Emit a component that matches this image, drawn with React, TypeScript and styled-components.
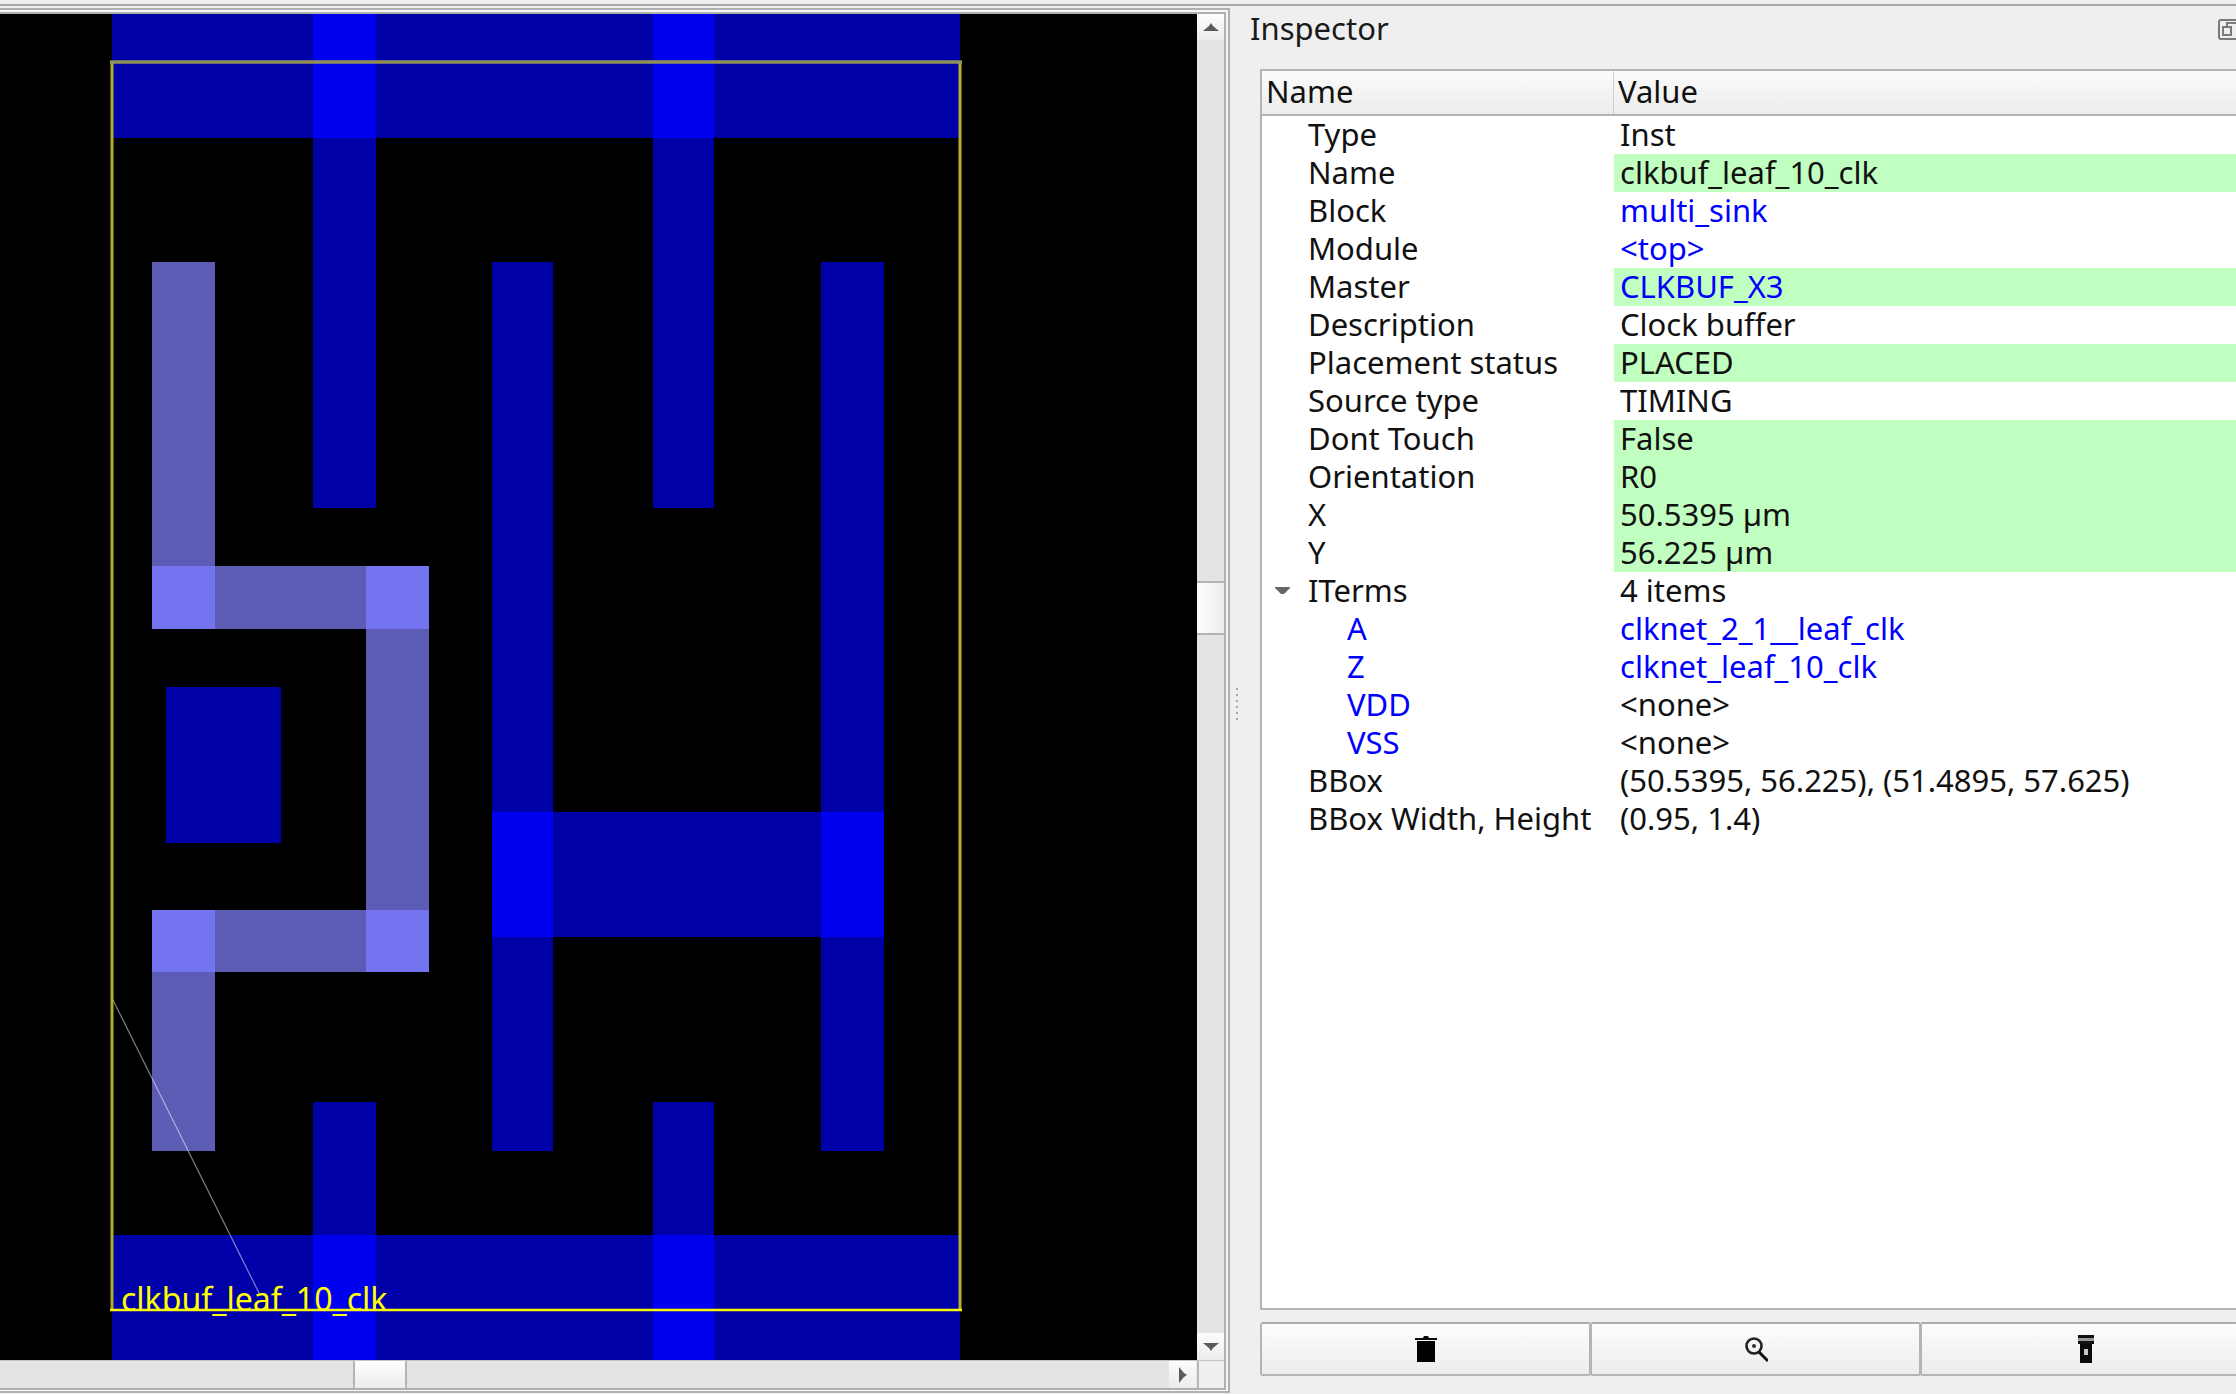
import React from 'react';
import styled, { createGlobalStyle } from 'styled-components';

const GlobalStyle = createGlobalStyle`
  html, body {
    margin: 0;
    padding: 0;
    width: 2236px;
    height: 1394px;
    overflow: hidden;
    background: #efefef;
    font-family: "Noto Sans", "Open Sans", sans-serif;
  }
`;

const Root = styled.div`
  width: 2236px;
  height: 1394px;
  padding-top: 4px;
  box-sizing: border-box;
  overflow: hidden;
  background: #efefef;
`;

const Columns = styled.div`
  display: flex;
  border-top: 2px solid #aaaaaa;
  width: 2250px;
`;

const CanvasDock = styled.div`
  flex: 0 0 1230px;
  box-sizing: border-box;
  padding-top: 2px;
`;

const OuterFrame = styled.div`
  border-top: 2px solid #b0b0b0;
  border-right: 2px solid #b0b0b0;
  border-bottom: 2px solid #b0b0b0;
  padding: 2px 2px 1px 0;
  background: #f6f6f6;
`;

const InnerFrame = styled.div`
  display: grid;
  grid-template-columns: 1197px 27px;
  grid-template-rows: 1346px 28px;
  border-top: 2px solid #b0b0b0;
  border-right: 2px solid #b0b0b0;
  border-bottom: 2px solid #b0b0b0;
`;

const Layout = styled.svg`
  display: block;
  width: 1197px;
  height: 1346px;
  background: #000;
`;

const LayoutLabel = styled.text`
  font-family: "Noto Sans", sans-serif;
  font-size: 32px;
  fill: #ffff00;
`;

const VScroll = styled.div`
  display: flex;
  flex-direction: column;
  background: #e4e4e4;
`;

const HScroll = styled.div`
  display: flex;
  background: #e4e4e4;
  border-top: 1px solid #c4c4c4;
  box-sizing: border-box;
`;

const Track = styled.div<{ $size: number }>`
  flex: 0 0 ${(p) => p.$size}px;
  background: #e4e4e4;
`;

const Handle = styled.div<{ $size: number; $horizontal?: boolean }>`
  flex: 0 0 ${(p) => p.$size}px;
  box-sizing: border-box;
  background: linear-gradient(to ${(p) => (p.$horizontal ? 'bottom' : 'right')}, #ffffff, #ececec);
  ${(p) =>
    p.$horizontal
      ? 'border-left: 2px solid #b4b4b4; border-right: 2px solid #b4b4b4;'
      : 'border-top: 2px solid #b4b4b4; border-bottom: 2px solid #b4b4b4;'}
`;

const ArrowButton = styled.div<{ $size: number }>`
  flex: 0 0 ${(p) => p.$size}px;
  display: flex;
  align-items: center;
  justify-content: center;
  box-sizing: border-box;
  background: linear-gradient(to bottom, #fcfcfc, #ececec);
`;

const Corner = styled.div`
  background: #efefef;
  border-top: 1px solid #c4c4c4;
  border-left: 2px solid #b8b8b8;
  box-sizing: border-box;
`;

const Panel = styled.div`
  flex: 0 0 1020px;
  position: relative;
  box-sizing: border-box;
  padding-left: 30px;
`;

const GripDots = styled.svg`
  position: absolute;
  left: 6px;
  top: 682px;
  width: 2px;
  height: 34px;
`;

const TitleBar = styled.div`
  height: 63px;
  display: flex;
  align-items: flex-start;
  justify-content: space-between;
  padding-right: 10px;
  margin-left: -10px;
`;

const Title = styled.div`
  font-size: 31px;
  line-height: 44px;
  color: #1a1a1a;
`;

const FloatIcon = styled.svg`
  width: 22px;
  height: 22px;
  margin-top: 13px;
`;

const Tree = styled.div`
  height: 1241px;
  box-sizing: border-box;
  border: 2px solid #b4b4b4;
  background: #fff;
  font-size: 31px;
  color: #111;
`;

const HeaderRow = styled.div`
  display: flex;
  height: 45px;
  box-sizing: border-box;
  border-bottom: 2px solid #b4b4b4;
  background: linear-gradient(to bottom, #fbfbfb, #ececec);
`;

const HeaderCell = styled.div<{ $width?: number }>`
  ${(p) => (p.$width ? `flex: 0 0 ${p.$width}px; border-right: 1px solid #cfcfcf;` : 'flex: 1;')}
  box-sizing: border-box;
  padding-left: 4px;
  line-height: 41px;
`;

const Row = styled.div`
  display: flex;
  height: 38px;
  line-height: 36px;
`;

const NameCell = styled.div<{ $depth?: number }>`
  flex: 0 0 352px;
  box-sizing: border-box;
  padding-left: ${(p) => (p.$depth ? 85 : 46)}px;
  position: relative;
  white-space: nowrap;
  color: ${(p) => (p.$depth ? '#0000ff' : 'inherit')};
`;

const ValueCell = styled.div<{ $edited?: boolean; $link?: boolean }>`
  flex: 1;
  padding-left: 6px;
  white-space: nowrap;
  background: ${(p) => (p.$edited ? '#c0ffc0' : 'transparent')};
  color: ${(p) => (p.$link ? '#0000ff' : 'inherit')};
`;

const Caret = styled.svg`
  position: absolute;
  left: 13px;
  top: 15px;
  width: 15px;
  height: 8px;
`;

const Buttons = styled.div`
  display: grid;
  grid-template-columns: repeat(3, 1fr);
  height: 54px;
  margin-top: 12px;
`;

const ToolButton = styled.div`
  display: flex;
  align-items: center;
  justify-content: center;
  border: 2px solid #b4b4b4;
  border-top-color: #acacac;
  border-radius: 3px;
  margin-right: -1px;
  box-sizing: border-box;
  background: linear-gradient(to bottom, #fdfdfd, #ececec);
`;

const ToolIcon = styled.svg`
  width: 24px;
  height: 30px;
`;

type Rect = [number, number, number, number];

// shapes in view coordinates: y is screen y minus 14
const metal: Rect[] = [
  [112, 0, 848, 124],
  [112, 1221, 848, 125],
  [313, 0, 63, 494],
  [653, 0, 61, 494],
  [313, 1088, 63, 258],
  [653, 1088, 61, 258],
  [492, 248, 61, 889],
  [821, 248, 63, 889],
  [492, 798, 392, 125],
  [166, 673, 115, 156],
];

const metalBright: Rect[] = [
  [313, 0, 63, 124],
  [653, 0, 61, 124],
  [313, 1221, 63, 125],
  [653, 1221, 61, 125],
  [492, 798, 61, 125],
  [821, 798, 63, 125],
];

const pin: Rect[] = [
  [152, 248, 63, 304],
  [152, 552, 277, 63],
  [366, 552, 63, 344],
  [152, 896, 277, 62],
  [152, 896, 63, 241],
];

const pinBright: Rect[] = [
  [152, 552, 63, 63],
  [366, 552, 63, 63],
  [152, 896, 63, 62],
  [366, 896, 63, 62],
];

const Rects = ({ items, fill }: { items: Rect[]; fill: string }) => (
  <>
    {items.map(([x, y, width, height]) => (
      <rect key={`${x}-${y}-${width}`} x={x} y={y} width={width} height={height} fill={fill} />
    ))}
  </>
);

const LayoutView = () => (
  <Layout viewBox="0 0 1197 1346">
    <Rects items={metal} fill="#0000a8" />
    <Rects items={metalBright} fill="#0000f0" />
    <Rects items={pin} fill="#5c5cb4" />
    <Rects items={pinBright} fill="#7474f0" />
    <line x1="112" y1="984" x2="260" y2="1281" stroke="#ffffff" strokeOpacity="0.5" strokeWidth="1.2" />
    <path d="M112 48V1296" stroke="#b0b028" strokeWidth="3" fill="none" />
    <path d="M960 48V1296" stroke="#b8b030" strokeWidth="3" fill="none" />
    <path d="M110 48H962" stroke="#90905a" strokeWidth="3.5" fill="none" />
    <path d="M110 1296H962" stroke="#f8f800" strokeWidth="2.5" fill="none" />
    <LayoutLabel x="121" y="1297">clkbuf_leaf_10_clk</LayoutLabel>
  </Layout>
);

const arrows = {
  up: 'M8 0 L10 3 L16 8 L0 8 L6 3 Z',
  down: 'M0 0 H16 L10 5 L8 8 L6 5 Z',
  right: 'M0 0 V16 L5 10 L8 8 L5 6 Z',
};

const Arrow = ({ dir }: { dir: keyof typeof arrows }) => (
  <svg width={dir === 'right' ? 8 : 16} height={dir === 'right' ? 16 : 8}>
    <path d={arrows[dir]} fill="#5a5a5a" />
  </svg>
);

type RowData = {
  name: string;
  value: string;
  edited?: boolean;
  link?: boolean;
  depth?: number;
  open?: boolean;
};

const rows: RowData[] = [
  { name: 'Type', value: 'Inst' },
  { name: 'Name', value: 'clkbuf_leaf_10_clk', edited: true },
  { name: 'Block', value: 'multi_sink', link: true },
  { name: 'Module', value: '<top>', link: true },
  { name: 'Master', value: 'CLKBUF_X3', edited: true, link: true },
  { name: 'Description', value: 'Clock buffer' },
  { name: 'Placement status', value: 'PLACED', edited: true },
  { name: 'Source type', value: 'TIMING' },
  { name: 'Dont Touch', value: 'False', edited: true },
  { name: 'Orientation', value: 'R0', edited: true },
  { name: 'X', value: '50.5395 µm', edited: true },
  { name: 'Y', value: '56.225 µm', edited: true },
  { name: 'ITerms', value: '4 items', open: true },
  { name: 'A', value: 'clknet_2_1__leaf_clk', link: true, depth: 1 },
  { name: 'Z', value: 'clknet_leaf_10_clk', link: true, depth: 1 },
  { name: 'VDD', value: '<none>', depth: 1 },
  { name: 'VSS', value: '<none>', depth: 1 },
  { name: 'BBox', value: '(50.5395, 56.225), (51.4895, 57.625)' },
  { name: 'BBox Width, Height', value: '(0.95, 1.4)' },
];

export default function App() {
  return (
    <Root>
      <GlobalStyle />
      <Columns>
        <CanvasDock>
          <OuterFrame>
            <InnerFrame>
              <LayoutView />
              <VScroll>
                <ArrowButton $size={26}>
                  <Arrow dir="up" />
                </ArrowButton>
                <Track $size={541} />
                <Handle $size={54} />
                <Track $size={698} />
                <ArrowButton $size={27}>
                  <Arrow dir="down" />
                </ArrowButton>
              </VScroll>
              <HScroll>
                <Track $size={353} />
                <Handle $size={54} $horizontal />
                <Track $size={762} />
                <ArrowButton $size={27}>
                  <Arrow dir="right" />
                </ArrowButton>
              </HScroll>
              <Corner />
            </InnerFrame>
          </OuterFrame>
        </CanvasDock>
        <Panel>
          <GripDots viewBox="0 0 2 34">
            <path d="M1 0V34" stroke="#a8a8a8" strokeWidth="2" strokeDasharray="2 4" />
          </GripDots>
          <TitleBar>
            <Title>Inspector</Title>
            <FloatIcon viewBox="0 0 22 22">
              <rect x="1" y="1" width="20" height="19" rx="2" fill="none" stroke="#7a7a7a" strokeWidth="2" />
              <rect x="5" y="8" width="8" height="8" fill="none" stroke="#7a7a7a" strokeWidth="2" />
              <path d="M9 8V4H18" fill="none" stroke="#7a7a7a" strokeWidth="2" />
            </FloatIcon>
          </TitleBar>
          <Tree>
            <HeaderRow>
              <HeaderCell $width={352}>Name</HeaderCell>
              <HeaderCell>Value</HeaderCell>
            </HeaderRow>
            {rows.map((r) => (
              <Row key={r.name}>
                <NameCell $depth={r.depth}>
                  {r.open && (
                    <Caret viewBox="0 0 15 8">
                      <path d="M0 0H15V1L9 7H6L0 1Z" fill="#666666" />
                    </Caret>
                  )}
                  {r.name}
                </NameCell>
                <ValueCell $edited={r.edited} $link={r.link}>
                  {r.value}
                </ValueCell>
              </Row>
            ))}
          </Tree>
          <Buttons>
            <ToolButton>
              <ToolIcon viewBox="0 0 24 30">
                <path d="M10 2h4l1 2h8v2H1V4h8z" fill="#0a0a0a" />
                <rect x="3" y="7" width="18" height="21" fill="#000" />
              </ToolIcon>
            </ToolButton>
            <ToolButton>
              <ToolIcon viewBox="0 0 24 30">
                <circle cx="10" cy="12" r="7.5" fill="none" stroke="#222" strokeWidth="2.6" />
                <circle cx="10" cy="12" r="2" fill="#333" />
                <path d="M15 18L24 27" stroke="#111" strokeWidth="3" />
              </ToolIcon>
            </ToolButton>
            <ToolButton>
              <ToolIcon viewBox="0 0 24 30">
                <rect x="4" y="1" width="16" height="3" fill="#111" />
                <rect x="4" y="4" width="16" height="3" fill="#999" />
                <rect x="4" y="7" width="16" height="3" fill="#111" />
                <path d="M6 10H18V29H6Z" fill="#0a0a0a" />
                <rect x="10" y="15" width="4" height="6" fill="#c8c8c8" />
              </ToolIcon>
            </ToolButton>
          </Buttons>
        </Panel>
      </Columns>
    </Root>
  );
}
